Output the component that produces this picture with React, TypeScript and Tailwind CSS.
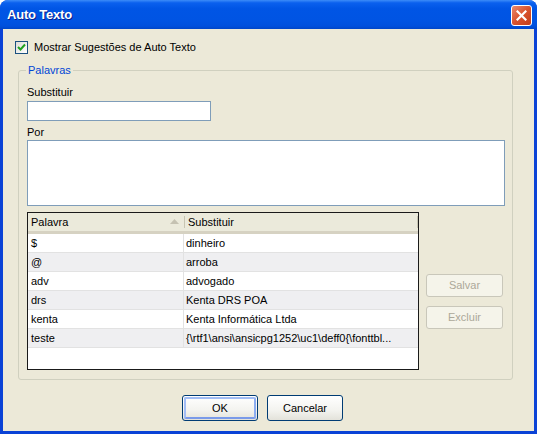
import React from 'react'

const rows: [string, string][] = [
  ['$', 'dinheiro'],
  ['@', 'arroba'],
  ['adv', 'advogado'],
  ['drs', 'Kenta DRS POA'],
  ['kenta', 'Kenta Informática Ltda'],
  ['teste', '{\\rtf1\\ansi\\ansicpg1252\\uc1\\deff0{\\fonttbl...'],
]

function CheckBox() {
  return (
    <div className="w-[13px] h-[13px] border border-[#1C5180] bg-[linear-gradient(135deg,#DCDCD7,#FFFFFF)] flex items-center justify-center">
      <svg width="9" height="9" viewBox="0 0 9 9">
        <path d="M1 4 L3.5 6.5 L8 1.5" stroke="#21A121" strokeWidth="2" fill="none" />
      </svg>
    </div>
  )
}

function XpButton({ label, primary, disabled }: { label: string; primary?: boolean; disabled?: boolean }) {
  if (disabled) {
    return (
      <div className="w-[77px] h-[23px] rounded-[3px] border border-[#C9C7BA] bg-[#F5F4EA] flex items-center justify-center text-[#ACA899]">
        {label}
      </div>
    )
  }
  return (
    <div className="w-[76px] h-[26px] rounded-[3px] border border-[#003C74] bg-[linear-gradient(to_bottom,#FFFFFF,#F3F3EF_60%,#E3E2DA)] p-[1px]">
      <div
        className={
          'w-full h-full rounded-[2px] flex items-center justify-center ' +
          (primary ? 'border-2 border-[#A2BDF5] border-b-[#7A9AE9] border-r-[#8DADF0]' : '')
        }
      >
        {label}
      </div>
    </div>
  )
}

export default function App() {
  return (
    <div className="w-[537px] h-[434px] flex flex-col rounded-t-[8px] overflow-hidden bg-[#0A42D6] text-[11px] text-black font-['Liberation_Sans',Arial,sans-serif]">
      {/* barra de titulo */}
      <div className="h-[29px] shrink-0 flex items-center justify-between pl-[7px] pr-[5px] bg-[linear-gradient(to_bottom,#3C8CF8_0%,#0A60EE_10%,#0055E5_30%,#0054E3_70%,#0050DD_90%,#0046C8_100%)]">
        <span className="text-white font-bold text-[13px] tracking-[-0.2px] [text-shadow:1px_1px_0_#0A1E8C]">Auto Texto</span>
        <div className="w-[21px] h-[21px] mt-[1px] rounded-[3px] border border-white bg-[linear-gradient(135deg,#EA8A6E,#D9532E_50%,#C23E1A)] flex items-center justify-center">
          <svg width="11" height="11" viewBox="0 0 11 11">
            <path d="M1.5 1.5 L9.5 9.5 M9.5 1.5 L1.5 9.5" stroke="white" strokeWidth="2.2" strokeLinecap="square" />
          </svg>
        </div>
      </div>

      <div className="flex-1 mx-[3px] mb-[3px] bg-[#ECE9D8] flex flex-col">
        {/* checkbox */}
        <div className="mt-[12px] ml-[12px] flex items-center gap-[6px] h-[13px]">
          <CheckBox />
          <span>Mostrar Sugestões de Auto Texto</span>
        </div>

        {/* grupo Palavras */}
        <div className="mt-[16px] ml-[15px] w-[495px] h-[310px] border border-[#D0D0BF] rounded-[3px] relative pt-[15px] pl-[8px]">
          <span className="absolute left-[7px] top-[-7px] px-[2px] bg-[#ECE9D8] text-[#0046D5] leading-[13px]">Palavras</span>
          <div className="leading-[13px] h-[13px]">Substituir</div>
          <div className="mt-[2px] w-[184px] h-[20px] border border-[#7F9DB9] bg-white" />
          <div className="mt-[5px] leading-[13px] h-[13px]">Por</div>
          <div className="mt-[1px] w-[478px] h-[66px] border border-[#7F9DB9] bg-white" />

          <div className="mt-[6px] flex gap-[7px]">
            {/* lista */}
            <div className="w-[392px] h-[158px] border border-[#1A1A1A] bg-white">
              <div className="h-[21px] flex bg-[#EBEADB] border-b-[3px] border-[#D6D2C2]">
                <div className="w-[156px] flex items-center pl-[3px] relative">
                  <span>Palavra</span>
                  <svg className="absolute right-[5px] top-[6px]" width="9" height="5" viewBox="0 0 9 5">
                    <path d="M4.5 0 L9 5 L0 5 Z" fill="#C5C2B2" />
                  </svg>
                </div>
                <div className="w-[1px] my-[3px] bg-[#C7C5B2]" />
                <div className="w-[232px] flex items-center pl-[3px]">Substituir</div>
                <div className="w-[1px] my-[3px] bg-[#C7C5B2]" />
              </div>
              {rows.map(([a, b], i) => (
                <div key={a} className={'h-[19px] flex border-b border-[#E2E2E2] ' + (i % 2 ? 'bg-[#EFEFF1]' : 'bg-white')}>
                  <div className="w-[156px] flex items-center pl-[3px] border-r border-[#E2E2E2]">{a}</div>
                  <div className="flex-1 flex items-center pl-[2px] whitespace-nowrap overflow-hidden">{b}</div>
                </div>
              ))}
            </div>

            <div className="pt-[62px] flex flex-col gap-[9px]">
              <XpButton label="Salvar" disabled />
              <XpButton label="Excluir" disabled />
            </div>
          </div>
        </div>

        {/* botoes */}
        <div className="mt-[15px] ml-[179px] flex gap-[9px]">
          <XpButton label="OK" primary />
          <XpButton label="Cancelar" />
        </div>
      </div>
    </div>
  )
}
